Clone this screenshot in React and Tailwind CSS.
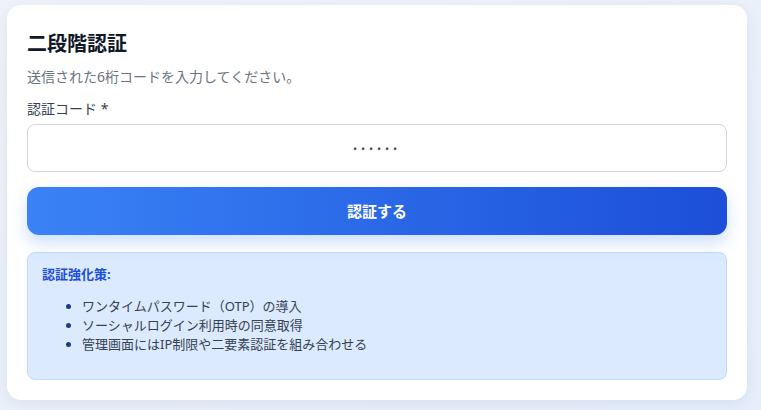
import React from "react";

const measures = [
  "ワンタイムパスワード（OTP）の導入",
  "ソーシャルログイン利用時の同意取得",
  "管理画面にはIP制限や二要素認証を組み合わせる",
];

export default function App() {
  return (
    <div
      className="min-h-[410px] w-[761px] bg-gradient-to-br from-[#eff2f8] to-[#e6eefc] pt-[5px] pl-[7px]"
      style={{ fontFamily: '"Noto Sans", "Noto Sans CJK JP", sans-serif' }}
    >
      <div className="w-[740px] h-[395px] bg-white rounded-[14px] shadow-[0_4px_14px_rgba(30,60,120,0.08)] px-5 pt-[25px]">
        {/* Header */}
        <h2 className="text-[20px] leading-[28px] font-bold text-[#111827]">二段階認証</h2>
        <p className="mt-[9px] text-sm leading-[20px] text-[#6b7280]">送信された6桁コードを入力してください。</p>

        {/* Code input */}
        <label className="block mt-[12px] text-sm leading-[20px] text-[#374151]">認証コード *</label>
        <input
          type="text"
          placeholder="••••••"
          className="mt-[5px] w-full h-[48px] rounded-lg border border-[#d1d5db] text-center text-[11px] tracking-[0.35em] placeholder:text-[#4b5563] outline-none"
        />

        {/* Submit */}
        <button className="mt-[15px] w-full h-[48px] rounded-xl bg-gradient-to-r from-[#3b82f6] to-[#1d4ed8] text-white text-[15px] font-bold shadow-[0_8px_16px_rgba(59,130,246,0.25)]">
          認証する
        </button>

        {/* Info */}
        <div className="mt-[17px] h-[128px] rounded-lg border border-[#bfdbfe] bg-[#dbeafe] px-[14px] pt-[11px]">
          <p className="text-[13px] leading-[20px] font-bold text-[#1d4ed8]">認証強化策:</p>
          <ul className="mt-[13px] list-disc pl-10 marker:text-[#1e3a8a] text-[13px] leading-[19px] text-[#374151]">
            {measures.map(m => (
              <li key={m}>{m}</li>
            ))}
          </ul>
        </div>
      </div>
    </div>
  );
}
